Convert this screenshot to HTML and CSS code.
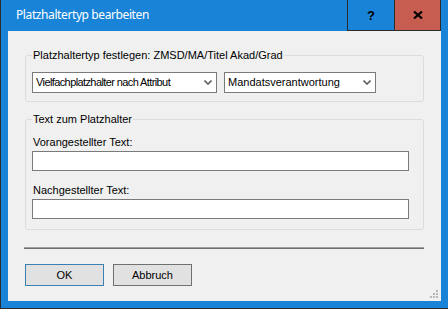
FILE: index.html
```html
<!DOCTYPE html>
<html lang="de">
<head>
<meta charset="utf-8">
<title>Platzhaltertyp bearbeiten</title>
<link rel="stylesheet" href="styles.css">
</head>
<body>
<div class="window">
  <div class="titlebar">
    <div class="title">Platzhaltertyp bearbeiten</div>
    <div class="tbtn help">?</div>
    <div class="tbtn close">
      <svg width="10" height="8" viewBox="0 0 10 8"><path d="M1 0.5 L9 7.5 M9 0.5 L1 7.5" stroke="#000" stroke-width="2.2" fill="none"/></svg>
    </div>
  </div>
  <div class="client">
    <fieldset class="group g1">
      <legend>Platzhaltertyp festlegen: ZMSD/MA/Titel Akad/Grad</legend>
      <div class="row">
        <div class="combo c1"><span class="tight">Vielfachplatzhalter nach Attribut</span><svg class="chev" width="8" height="5" viewBox="0 0 8 5"><path d="M0.5 0.5 L4 4 L7.5 0.5" stroke="#606060" stroke-width="1.6" fill="none"/></svg></div>
        <div class="combo c2"><span>Mandatsverantwortung</span><svg class="chev" width="8" height="5" viewBox="0 0 8 5"><path d="M0.5 0.5 L4 4 L7.5 0.5" stroke="#606060" stroke-width="1.6" fill="none"/></svg></div>
      </div>
    </fieldset>
    <fieldset class="group g2">
      <legend>Text zum Platzhalter</legend>
      <div class="label">Vorangestellter Text:</div>
      <div class="textbox"></div>
      <div class="label second">Nachgestellter Text:</div>
      <div class="textbox"></div>
    </fieldset>
    <div class="separator"></div>
    <div class="buttons">
      <div class="btn ok">OK</div>
      <div class="btn">Abbruch</div>
    </div>
    <svg class="grip" width="10" height="10" viewBox="0 0 10 10">
      <rect x="7" y="1" width="2" height="2" fill="#b8b8b8"/>
      <rect x="4" y="4" width="2" height="2" fill="#b8b8b8"/>
      <rect x="7" y="4" width="2" height="2" fill="#b8b8b8"/>
      <rect x="1" y="7" width="2" height="2" fill="#b8b8b8"/>
      <rect x="4" y="7" width="2" height="2" fill="#b8b8b8"/>
      <rect x="7" y="7" width="2" height="2" fill="#b8b8b8"/>
    </svg>
  </div>
</div>
</body>
</html>
```

FILE: styles.css
```css
* { box-sizing: border-box; }
html, body { margin: 0; padding: 0; }
body {
  width: 448px;
  height: 309px;
  overflow: hidden;
  font-family: "Liberation Sans", Arial, sans-serif;
  font-size: 11px;
  color: #000;
}
.window {
  width: 448px;
  height: 309px;
  background: #1883d7;
  border-left: 1px solid #2b2b2b;
  border-bottom: 1px solid #2b2b2b;
  display: flex;
  flex-direction: column;
}
.titlebar {
  height: 31px;
  display: flex;
  flex-shrink: 0;
}
.title {
  flex: 1;
  padding-left: 15px;
  padding-top: 7px;
  font-family: "Noto Sans", "Open Sans", sans-serif;
  font-size: 12px;
  letter-spacing: -0.4px;
  line-height: 16px;
  color: #fff;
}
.tbtn {
  height: 31px;
  border-bottom: 1px solid #2b2b2b;
  border-left: 1px solid #2b2b2b;
  display: flex;
  align-items: center;
  justify-content: center;
}
.help {
  width: 47px;
  font-weight: bold;
  font-size: 13px;
  padding-top: 1px;
}
.close {
  width: 47px;
  background: #c75d51;
  border-right: 1px solid #2b2b2b;
  margin-right: 7px;
}
.client {
  position: relative;
  flex: 1;
  margin: 0 7px 7px 7px;
  background: #f0f0f0;
  padding: 0 17px;
  display: flex;
  flex-direction: column;
}
.group {
  margin: 0;
  border: 1px solid #d8dde2;
  border-radius: 3px;
  padding: 10px 6px 8px 6px;
  min-width: 0;
}
.group legend {
  padding: 0 1px;
  line-height: 13px;
  font-size: 11px;
}
.g1 { margin-top: 18px; }
.g2 { margin-top: 11px; padding-bottom: 10px; }
.row {
  display: flex;
  gap: 7px;
}
.combo {
  height: 21px;
  background: #fff;
  border: 1px solid #7a7a7a;
  display: flex;
  align-items: center;
  justify-content: space-between;
  padding: 0 4px 0 3px;
  line-height: 13px;
}
.tight { letter-spacing: -0.6px; }
.c1 { width: 185px; }
.c2 { width: 152px; }
.chev { display: block; }
.label {
  line-height: 13px;
  padding-left: 1px;
  margin-bottom: 2px;
}
.label.second { margin-top: 13px; }
.textbox {
  width: 377px;
  height: 20px;
  background: #fff;
  border: 1px solid #7a7a7a;
}
.separator {
  margin-top: 17px;
  margin-left: -1px;
  width: 400px;
  height: 2px;
  border-top: 1px solid #a0a0a0;
  border-bottom: 1px solid #6d6d6d;
}
.buttons {
  margin-top: 15px;
  display: flex;
  gap: 9px;
}
.btn {
  width: 79px;
  height: 22px;
  background: #e1e1e1;
  border: 1px solid #707070;
  display: flex;
  align-items: center;
  justify-content: center;
  line-height: 13px;
}
.btn.ok { border-color: #3c7fb1; }
.grip {
  position: absolute;
  right: 2px;
  bottom: 2px;
}
```
